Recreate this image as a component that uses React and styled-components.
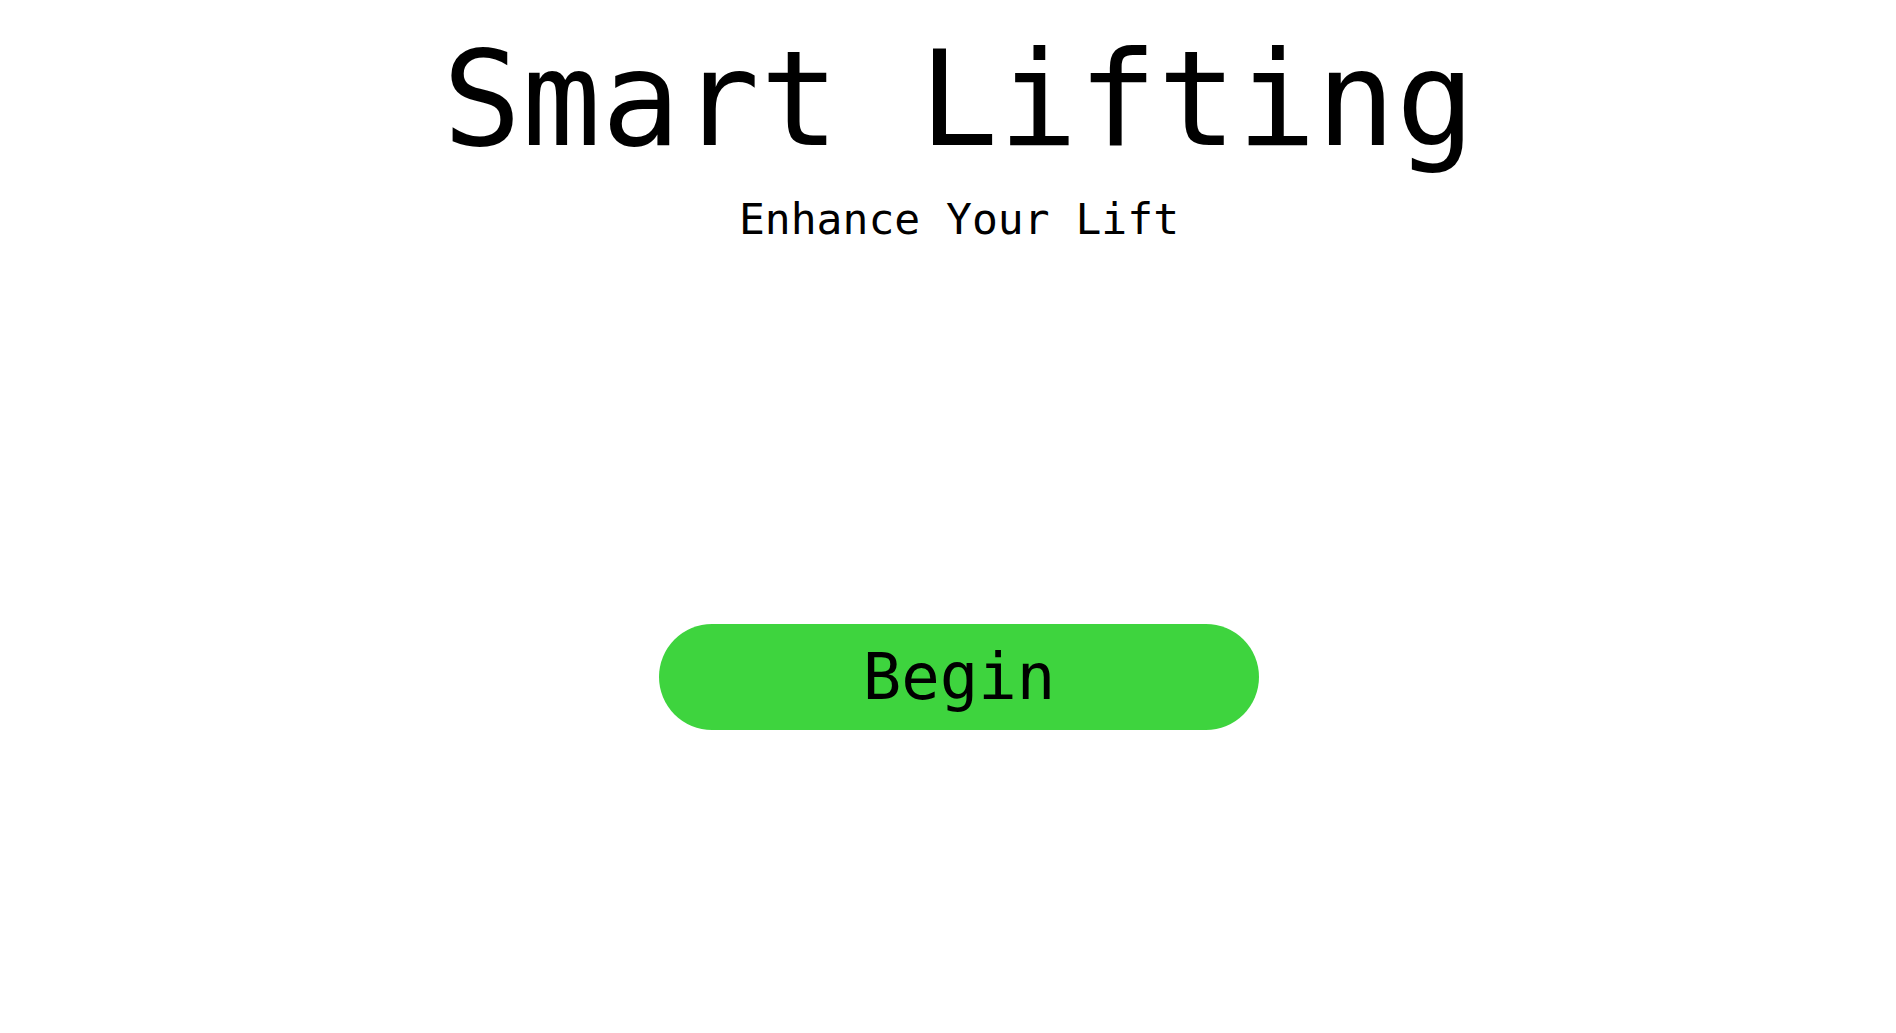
import React from 'react';
import styled, { createGlobalStyle } from 'styled-components';

const GlobalStyle = createGlobalStyle`
  body {
    margin: 0;
    background: #ffffff;
    font-family: 'DejaVu Sans Mono', 'Liberation Mono', monospace;
    color: #000000;
  }
`;

const Page = styled.main`
  display: flex;
  flex-direction: column;
  align-items: center;
  padding: 34px 0 0 22px;
  min-height: 100vh;
  box-sizing: border-box;
`;

const Title = styled.h1`
  margin: 0;
  font-size: 131px;
  font-weight: normal;
  letter-spacing: 0.6px;
  line-height: 1;
  white-space: pre;
`;

const Subtitle = styled.h2`
  margin: 33px 0 0;
  font-size: 43px;
  font-weight: normal;
  line-height: 1;
  white-space: pre;
`;

const BeginButton = styled.button`
  margin-top: 383px;
  width: 600px;
  height: 106px;
  border: none;
  border-radius: 53px;
  background: #3ed43e;
  color: #000000;
  font-family: inherit;
  font-size: 64px;
  line-height: 1;
  cursor: pointer;
  display: flex;
  align-items: center;
  justify-content: center;
  padding: 0;
`;

const App = () => (
  <>
    <GlobalStyle />
    <Page>
      <Title>Smart Lifting</Title>
      <Subtitle>Enhance Your Lift</Subtitle>
      <BeginButton type="button">Begin</BeginButton>
    </Page>
  </>
);

export default App;
